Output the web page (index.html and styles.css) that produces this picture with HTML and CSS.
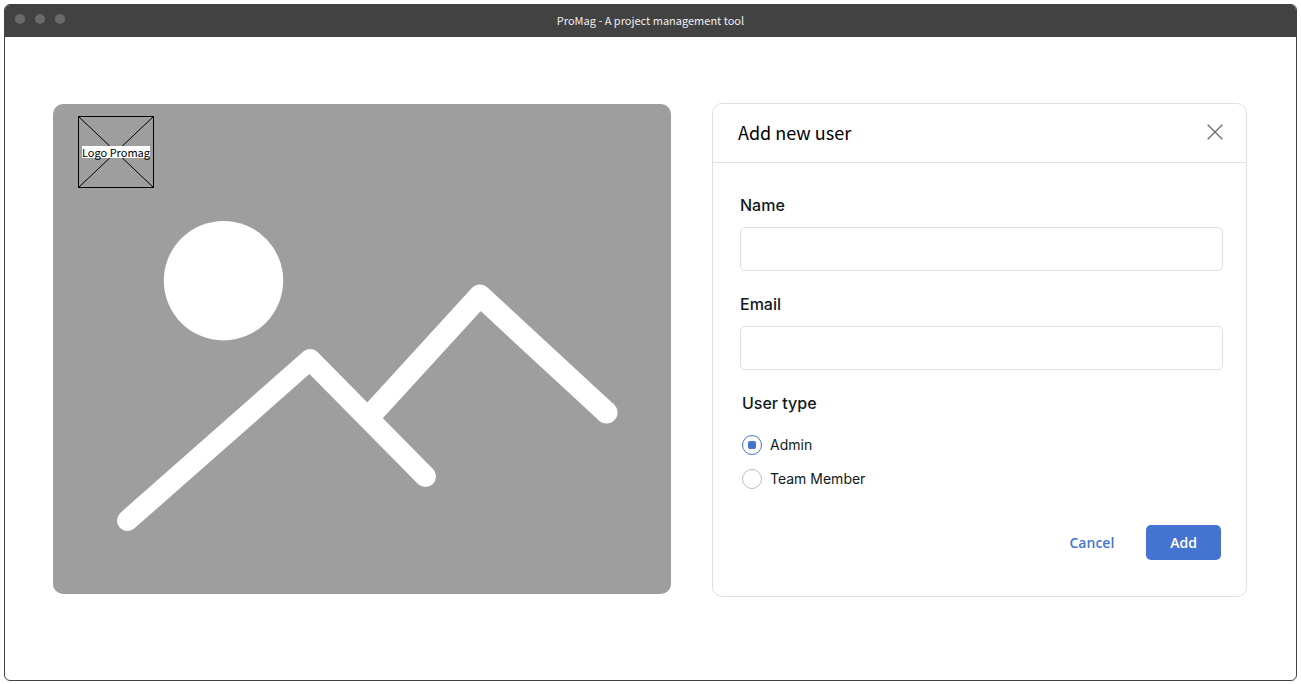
FILE: index.html
```html
<!DOCTYPE html>
<html lang="en">
<head>
<meta charset="utf-8">
<meta name="viewport" content="width=device-width, initial-scale=1">
<title>ProMag - A project management tool</title>
<link rel="stylesheet" href="styles.css">
</head>
<body>
<div class="window">
  <header class="titlebar">
    <div class="dots"><span class="dot"></span><span class="dot"></span><span class="dot"></span></div>
    <h1 class="window-title">ProMag - A project management tool</h1>
  </header>
  <main class="content">
    <section class="hero">
      <svg class="hero-art" viewBox="0 0 618 490" aria-hidden="true">
        <circle cx="170.500" cy="176.700" r="59.700" fill="#fff"/>
        <g fill="none" stroke="#fff" stroke-width="21" stroke-linecap="round" stroke-linejoin="round">
          <path d="M74.500 416.500L257 255.500L372.500 372.500"/>
        </g>
        <g fill="none" stroke="#fff" stroke-width="22" stroke-linejoin="round">
          <path d="M315 314L427 191.500L553.500 308.500"/>
          <path d="M553.500 308.500h.01" stroke-linecap="round"/>
        </g>
      </svg>
      <div class="logo">
        <svg class="logo-cross" viewBox="0 0 76 72" preserveAspectRatio="none" aria-hidden="true">
          <path d="M.5.500h75v71H.5zM.5.500l75 71M75.500.500l-75 71" fill="none" stroke="#000"/>
        </svg>
        <span class="logo-text">Logo Promag</span>
      </div>
    </section>
    <form class="card">
      <header class="card-header">
        <h2 class="card-title">Add new user</h2>
        <button class="close" type="button" aria-label="Close">
          <svg width="16" height="16" viewBox="0 0 16 16" aria-hidden="true"><path d="M.7.700l14.600 14.600M15.300.700L.7 15.300" stroke="#6a6a6a" stroke-width="1.300"/></svg>
        </button>
      </header>
      <div class="card-body">
        <div class="field">
          <label class="label" for="name">Name</label>
          <input class="input" id="name" type="text">
        </div>
        <div class="field">
          <label class="label" for="email">Email</label>
          <input class="input" id="email" type="email">
        </div>
        <fieldset class="types">
          <legend class="label">User type</legend>
          <div class="options">
            <label class="option"><input class="radio" type="radio" name="type" checked>Admin</label>
            <label class="option"><input class="radio" type="radio" name="type">Team Member</label>
          </div>
        </fieldset>
        <div class="actions">
          <button class="btn btn-link" type="button">Cancel</button>
          <button class="btn btn-primary" type="submit">Add</button>
        </div>
      </div>
    </form>
  </main>
</div>
</body>
</html>
```
FILE: styles.css
```css
* {
  box-sizing: border-box;
}

body {
  margin: 0;
  padding: 4px 4px 3px;
  min-height: 100vh;
  display: flex;
  background: #fff;
  font-family: Inter, sans-serif;
  color: #101a21;
}

.window {
  flex: 1;
  display: flex;
  flex-direction: column;
  border: 1px solid #424242;
  border-radius: 6px;
  overflow: hidden;
}

.titlebar {
  display: grid;
  grid-template-columns: 1fr auto 1fr;
  align-items: center;
  height: 32px;
  padding: 0 10px 2px;
  background: #424242;
}

.dots {
  display: flex;
  gap: 10px;
  padding-bottom: 2px;
}

.dot {
  width: 10px;
  height: 10px;
  border-radius: 50%;
  background: #6a6a6a;
}

.window-title {
  margin: 0;
  font: 400 11px/18px "Noto Sans CJK SC", sans-serif;
  color: #eee;
}

.content {
  display: grid;
  grid-template-columns: 618fr 535fr;
  gap: 41px;
  align-items: start;
  padding: 66px 49px 0 48px;
}

.hero {
  display: grid;
  margin-top: 1px;
  background: #9e9e9e;
  border-radius: 10px;
  overflow: hidden;
}

.hero-art,
.logo {
  grid-area: 1 / 1;
}

.hero-art {
  display: block;
  width: 100%;
}

.logo {
  display: grid;
  place-items: center;
  width: 76px;
  height: 72px;
  margin: 12px 25px;
}

.logo-cross,
.logo-text {
  grid-area: 1 / 1;
}

.logo-cross {
  width: 100%;
  height: 100%;
}

.logo-text {
  background: #fff;
  color: #000;
  font: 400 11px/12px "Noto Sans CJK SC", sans-serif;
  white-space: nowrap;
}

.card {
  border: 1px solid #e0e0e0;
  border-radius: 10px;
}

.card-header {
  display: flex;
  align-items: center;
  justify-content: space-between;
  height: 59px;
  padding: 0 23px 2px 25px;
  border-bottom: 1px solid #e0e0e0;
}

.card-title {
  margin: 0;
  font: 400 18px/28px "Noto Sans CJK SC", sans-serif;
  color: #000;
}

.close {
  display: flex;
  padding: 0;
  border: 0;
  background: none;
}

.card-body {
  display: flex;
  flex-direction: column;
  gap: 21px;
  padding: 30px 23px 36px 27px;
}

.field {
  display: flex;
  flex-direction: column;
  gap: 10px;
}

.label {
  padding: 0;
  font-size: 16px;
  font-weight: 500;
  line-height: 24px;
}

.input {
  width: 100%;
  height: 44px;
  padding: 0 12px;
  border: 1px solid #e0e0e0;
  border-radius: 5px;
  background: #fff;
  font: 400 16px/24px Inter, sans-serif;
}

.types {
  margin: 0;
  padding: 0 2px;
  border: 0;
}

.options {
  display: flex;
  flex-direction: column;
  gap: 14px;
  padding-top: 20px;
}

.option {
  display: flex;
  align-items: center;
  gap: 8px;
  font-size: 14px;
  line-height: 20px;
}

.radio {
  appearance: none;
  display: grid;
  place-items: center;
  width: 20px;
  height: 20px;
  margin: 0;
  border: 1px solid #bdbdbd;
  border-radius: 50%;
}

.radio:checked {
  border-color: #4573d2;
}

.radio:checked::before {
  content: "";
  width: 8px;
  height: 8px;
  border-radius: 2px;
  background: #4573d2;
}

.actions {
  display: flex;
  justify-content: flex-end;
  gap: 8px;
  padding: 15px 2px 0 0;
}

.btn {
  height: 35px;
  padding: 0 24px;
  border: 0;
  border-radius: 5px;
  background: none;
  font: 600 14px/20px "Open Sans", sans-serif;
}

.btn-link {
  color: #4573d2;
}

.btn-primary {
  background: #4573d2;
  color: #fff;
}
```
